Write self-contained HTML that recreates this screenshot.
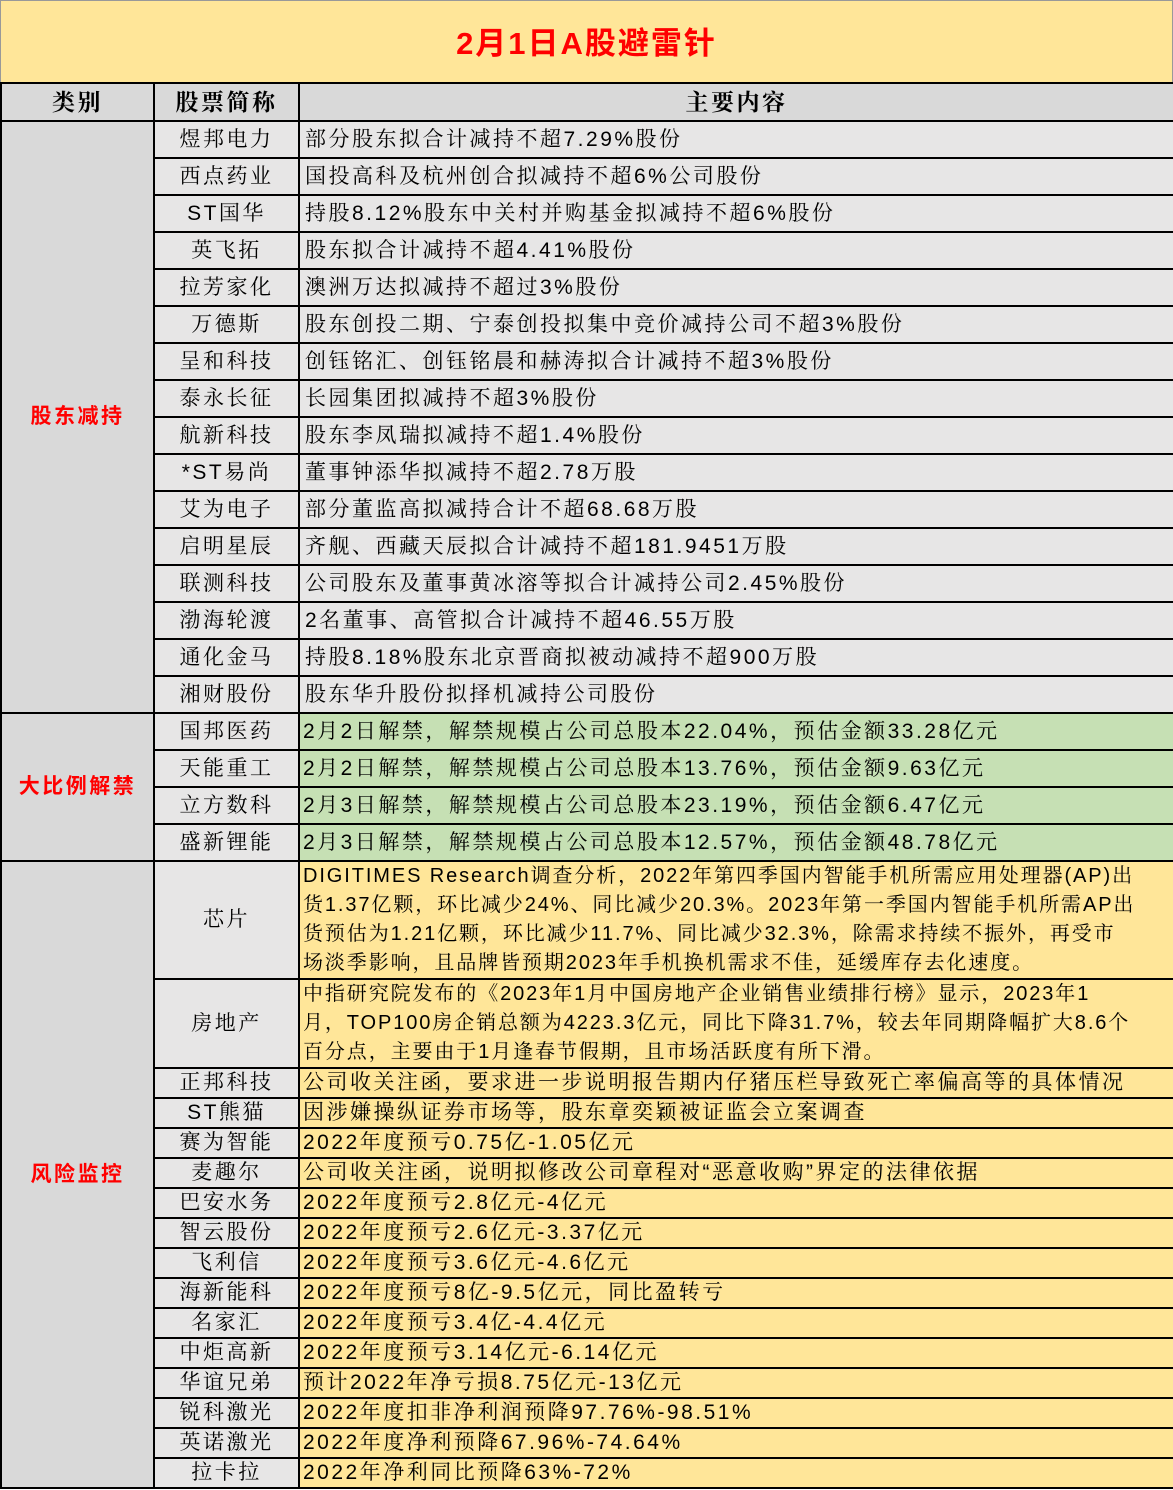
<!DOCTYPE html>
<html><head><meta charset="utf-8"><style>
body{margin:0;width:1173px;height:1490px;overflow:hidden;background:#fff;font-family:"Liberation Sans","Noto Serif CJK SC",serif;}
.title{position:absolute;left:0;top:0;width:1171px;height:81px;background:#ffe699;border:1px solid #999;border-bottom:2px solid #000;text-align:center;line-height:86px;color:#f00;font-weight:bold;font-size:31px;letter-spacing:2px;font-family:"Liberation Sans","Noto Sans CJK SC",sans-serif;}
table{position:absolute;left:0;top:82px;border-collapse:collapse;table-layout:fixed;width:1173px;}
td{border:2px solid #000;padding:0;overflow:hidden;white-space:nowrap;font-size:21px;letter-spacing:2.5px;color:#000;line-height:24px;}
td.c{background:#d9d9d9;text-align:center;color:#f00;font-weight:bold;font-size:21px;font-family:"Liberation Sans","Noto Sans CJK SC",sans-serif;}
td.n{background:#e7e6e6;text-align:center;}
td.t{background:#e7e6e6;padding-left:5px;}
td.g{background:#c6e0b4;padding-left:3px;}
td.y{background:#ffe699;padding-left:3px;}
td.m{background:#ffe699;padding-left:3px;font-size:20px;letter-spacing:1.9px;line-height:29px;}
tr.h td{background:#d9d9d9;text-align:center;font-weight:bold;font-size:23px;height:36px;}
tr.a td{height:35px;}
tr.b td{height:28px;}
</style></head><body>
<div class="title">2月1日A股避雷针</div>
<table>
<colgroup><col style="width:153px"><col style="width:145px"><col style="width:875px"></colgroup>
<tr class="h"><td>类别</td><td>股票简称</td><td>主要内容</td></tr>
<tr class="a"><td class="c" rowspan="16">股东减持</td><td class="n">煜邦电力</td><td class="t">部分股东拟合计减持不超7.29%股份</td></tr>
<tr class="a"><td class="n">西点药业</td><td class="t">国投高科及杭州创合拟减持不超6%公司股份</td></tr>
<tr class="a"><td class="n">ST国华</td><td class="t">持股8.12%股东中关村并购基金拟减持不超6%股份</td></tr>
<tr class="a"><td class="n">英飞拓</td><td class="t">股东拟合计减持不超4.41%股份</td></tr>
<tr class="a"><td class="n">拉芳家化</td><td class="t">澳洲万达拟减持不超过3%股份</td></tr>
<tr class="a"><td class="n">万德斯</td><td class="t">股东创投二期、宁泰创投拟集中竞价减持公司不超3%股份</td></tr>
<tr class="a"><td class="n">呈和科技</td><td class="t">创钰铭汇、创钰铭晨和赫涛拟合计减持不超3%股份</td></tr>
<tr class="a"><td class="n">泰永长征</td><td class="t">长园集团拟减持不超3%股份</td></tr>
<tr class="a"><td class="n">航新科技</td><td class="t">股东李凤瑞拟减持不超1.4%股份</td></tr>
<tr class="a"><td class="n">*ST易尚</td><td class="t">董事钟添华拟减持不超2.78万股</td></tr>
<tr class="a"><td class="n">艾为电子</td><td class="t">部分董监高拟减持合计不超68.68万股</td></tr>
<tr class="a"><td class="n">启明星辰</td><td class="t">齐舰、西藏天辰拟合计减持不超181.9451万股</td></tr>
<tr class="a"><td class="n">联测科技</td><td class="t">公司股东及董事黄冰溶等拟合计减持公司2.45%股份</td></tr>
<tr class="a"><td class="n">渤海轮渡</td><td class="t">2名董事、高管拟合计减持不超46.55万股</td></tr>
<tr class="a"><td class="n">通化金马</td><td class="t">持股8.18%股东北京晋商拟被动减持不超900万股</td></tr>
<tr class="a"><td class="n">湘财股份</td><td class="t">股东华升股份拟择机减持公司股份</td></tr>
<tr class="a"><td class="c" rowspan="4">大比例解禁</td><td class="n">国邦医药</td><td class="g">2月2日解禁，解禁规模占公司总股本22.04%，预估金额33.28亿元</td></tr>
<tr class="a"><td class="n">天能重工</td><td class="g">2月2日解禁，解禁规模占公司总股本13.76%，预估金额9.63亿元</td></tr>
<tr class="a"><td class="n">立方数科</td><td class="g">2月3日解禁，解禁规模占公司总股本23.19%，预估金额6.47亿元</td></tr>
<tr class="a"><td class="n">盛新锂能</td><td class="g">2月3日解禁，解禁规模占公司总股本12.57%，预估金额48.78亿元</td></tr>
<tr><td class="c" rowspan="16">风险监控</td><td class="n" style="height:116px">芯片</td><td class="m">DIGITIMES Research调查分析，2022年第四季国内智能手机所需应用处理器(AP)出<br>货1.37亿颗，环比减少24%、同比减少20.3%。2023年第一季国内智能手机所需AP出<br>货预估为1.21亿颗，环比减少11.7%、同比减少32.3%，除需求持续不振外，再受市<br>场淡季影响，且品牌皆预期2023年手机换机需求不佳，延缓库存去化速度。</td></tr>
<tr><td class="n" style="height:86px">房地产</td><td class="m">中指研究院发布的《2023年1月中国房地产企业销售业绩排行榜》显示，2023年1<br>月，TOP100房企销总额为4223.3亿元，同比下降31.7%，较去年同期降幅扩大8.6个<br>百分点，主要由于1月逢春节假期，且市场活跃度有所下滑。</td></tr>
<tr class="b"><td class="n">正邦科技</td><td class="y">公司收关注函，要求进一步说明报告期内仔猪压栏导致死亡率偏高等的具体情况</td></tr>
<tr class="b"><td class="n">ST熊猫</td><td class="y">因涉嫌操纵证券市场等，股东章奕颖被证监会立案调查</td></tr>
<tr class="b"><td class="n">赛为智能</td><td class="y">2022年度预亏0.75亿-1.05亿元</td></tr>
<tr class="b"><td class="n">麦趣尔</td><td class="y">公司收关注函，说明拟修改公司章程对“恶意收购”界定的法律依据</td></tr>
<tr class="b"><td class="n">巴安水务</td><td class="y">2022年度预亏2.8亿元-4亿元</td></tr>
<tr class="b"><td class="n">智云股份</td><td class="y">2022年度预亏2.6亿元-3.37亿元</td></tr>
<tr class="b"><td class="n">飞利信</td><td class="y">2022年度预亏3.6亿元-4.6亿元</td></tr>
<tr class="b"><td class="n">海新能科</td><td class="y">2022年度预亏8亿-9.5亿元，同比盈转亏</td></tr>
<tr class="b"><td class="n">名家汇</td><td class="y">2022年度预亏3.4亿-4.4亿元</td></tr>
<tr class="b"><td class="n">中炬高新</td><td class="y">2022年度预亏3.14亿元-6.14亿元</td></tr>
<tr class="b"><td class="n">华谊兄弟</td><td class="y">预计2022年净亏损8.75亿元-13亿元</td></tr>
<tr class="b"><td class="n">锐科激光</td><td class="y">2022年度扣非净利润预降97.76%-98.51%</td></tr>
<tr class="b"><td class="n">英诺激光</td><td class="y">2022年度净利预降67.96%-74.64%</td></tr>
<tr class="b"><td class="n">拉卡拉</td><td class="y">2022年净利同比预降63%-72%</td></tr>
</table>
</body></html>
